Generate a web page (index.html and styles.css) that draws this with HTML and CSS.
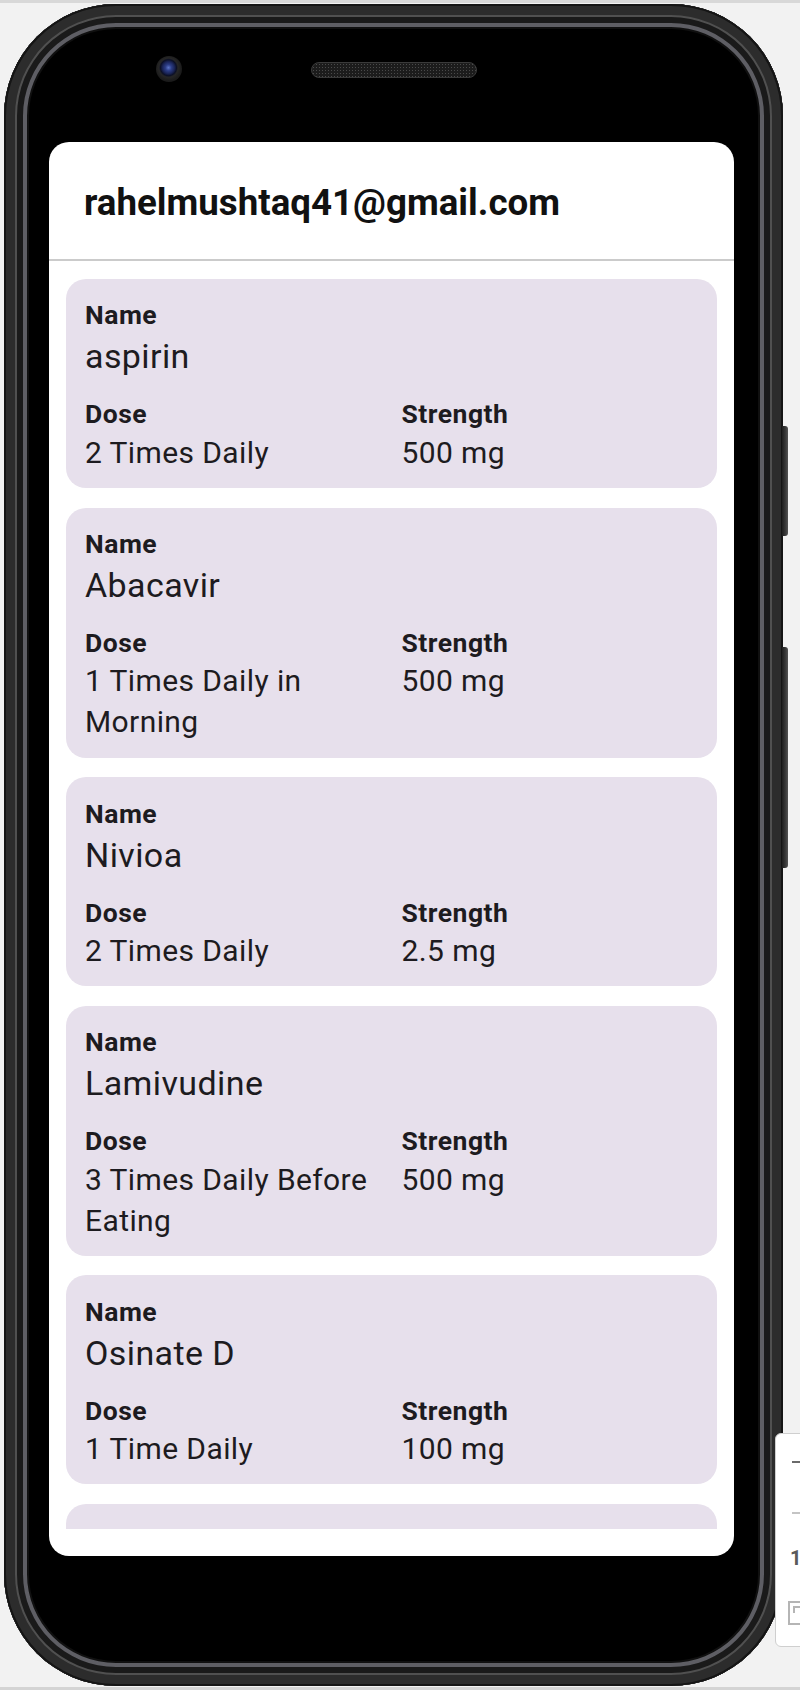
FILE: index.html
```html
<!DOCTYPE html>
<html lang="en">
<head>
<meta charset="utf-8">
<title>Medicines</title>
<link rel="stylesheet" href="styles.css">
</head>
<body>
<div class="top-strip"></div>
<div class="device">
  <div class="phone">
    <div class="bezel-top">
      <div class="camera"></div>
      <div class="speaker"></div>
    </div>
    <div class="screen">
      <header class="app-bar">
        <h1 class="email">rahelmushtaq41@gmail.com</h1>
      </header>
      <div class="list">
        <article class="card">
          <div class="label">Name</div>
          <div class="name-value">aspirin</div>
          <div class="row">
            <div class="col"><div class="label">Dose</div><div class="value">2 Times Daily</div></div>
            <div class="col"><div class="label">Strength</div><div class="value">500 mg</div></div>
          </div>
        </article>
        <article class="card">
          <div class="label">Name</div>
          <div class="name-value">Abacavir</div>
          <div class="row">
            <div class="col"><div class="label">Dose</div><div class="value">1 Times Daily in Morning</div></div>
            <div class="col"><div class="label">Strength</div><div class="value">500 mg</div></div>
          </div>
        </article>
        <article class="card">
          <div class="label">Name</div>
          <div class="name-value">Nivioa</div>
          <div class="row">
            <div class="col"><div class="label">Dose</div><div class="value">2 Times Daily</div></div>
            <div class="col"><div class="label">Strength</div><div class="value">2.5 mg</div></div>
          </div>
        </article>
        <article class="card">
          <div class="label">Name</div>
          <div class="name-value">Lamivudine</div>
          <div class="row">
            <div class="col"><div class="label">Dose</div><div class="value">3 Times Daily Before Eating</div></div>
            <div class="col"><div class="label">Strength</div><div class="value">500 mg</div></div>
          </div>
        </article>
        <article class="card">
          <div class="label">Name</div>
          <div class="name-value">Osinate D</div>
          <div class="row">
            <div class="col"><div class="label">Dose</div><div class="value">1 Time Daily</div></div>
            <div class="col"><div class="label">Strength</div><div class="value">100 mg</div></div>
          </div>
        </article>
        <article class="card card-peek" aria-hidden="true"></article>
      </div>
      <div class="screen-bottom"></div>
    </div>
    <div class="bezel-bottom"></div>
  </div>
  <div class="side-buttons">
    <span class="side-btn power"></span>
    <span class="side-btn volume"></span>
  </div>
</div>
<div class="emu-toolbar">
  <span class="tb-dash dark"></span>
  <span class="tb-dash light"></span>
  <span class="tb-num">1</span>
  <svg class="tb-icon" width="24" height="24" viewBox="0 0 24 24">
    <rect x="1" y="1" width="22" height="22" fill="none" stroke="#b5b5b5" stroke-width="2"/>
    <path d="M6 12V6h7" fill="none" stroke="#b5b5b5" stroke-width="2"/>
  </svg>
</div>
<div class="bottom-strip"></div>
</body>
</html>
```

FILE: styles.css
```css
html, body {
  margin: 0;
  padding: 0;
}

body {
  width: 800px;
  height: 1690px;
  overflow: hidden;
  background: #f2f2f2;
  display: flex;
  flex-direction: column;
  font-family: Roboto, "Noto Sans", sans-serif;
  position: relative;
}

.top-strip {
  height: 3px;
  background: #d8d8d8;
  flex-shrink: 0;
}

.bottom-strip {
  height: 3px;
  background: #d4d4d4;
  margin-top: auto;
  flex-shrink: 0;
}

.device {
  display: flex;
  margin-top: 1px;
  margin-left: 4px;
  flex-shrink: 0;
}

.phone {
  width: 779px;
  height: 1682px;
  box-sizing: border-box;
  padding: 0 49px 0 44.5px;
  border-radius: 112px;
  background: #000;
  box-shadow:
    inset 0 0 0 2px #151515,
    inset 0 0 0 11px #2c2c2c,
    inset 0 0 0 13px #505050,
    inset 0 0 0 19px #1a1a1a,
    inset 0 0 0 23px #5e5e64,
    inset 0 0 0 25px #101010;
  display: flex;
  flex-direction: column;
}

.bezel-top {
  height: 138px;
  flex-shrink: 0;
  display: flex;
  align-items: flex-start;
}

.camera {
  width: 26px;
  height: 26px;
  border-radius: 50%;
  margin-left: 107px;
  margin-top: 52px;
  background: radial-gradient(circle at 48% 45%, #5d75c8 0, #2c3d86 3px, #1a2457 6px, #0c1026 8px, #262626 9.5px, #1b1b1b 13px);
}

.speaker {
  width: 166px;
  height: 16px;
  box-sizing: border-box;
  margin-left: 129.5px;
  margin-top: 58px;
  border-radius: 8px;
  border: 1px solid #3a3a3a;
  background-color: #1c1c1c;
  background-image: radial-gradient(circle, #4a4a4a 0.7px, transparent 1px);
  background-size: 3px 3px;
}

.screen {
  width: 685.5px;
  height: 1414px;
  flex-shrink: 0;
  background: #fff;
  border-radius: 20px;
  overflow: hidden;
  display: flex;
  flex-direction: column;
}

.bezel-bottom {
  flex: 1;
}

.app-bar {
  height: 119px;
  box-sizing: border-box;
  padding: 39px 0 0 35.5px;
  border-bottom: 2px solid #cbcbcb;
  flex-shrink: 0;
}

.email {
  margin: 0;
  font-size: 36.7px;
  line-height: 44px;
  font-weight: 700;
  color: #111;
}

.list {
  height: 1268px;
  flex-shrink: 0;
  box-sizing: border-box;
  overflow: hidden;
  padding: 18px 17px 0 17.5px;
  display: flex;
  flex-direction: column;
  gap: 19.5px;
}

.screen-bottom {
  height: 27px;
  flex-shrink: 0;
}

.card {
  flex-shrink: 0;
  background: #e7e0ec;
  border-radius: 20px;
  padding: 20.4px 19px 15.2px 19px;
  color: #1d1b20;
}

.card-peek {
  height: 209px;
  box-sizing: border-box;
}

.label {
  font-size: 26.5px;
  line-height: 32px;
  font-weight: 700;
  letter-spacing: 0.5px;
}

.name-value {
  margin-top: 4px;
  font-size: 34px;
  line-height: 42px;
  font-weight: 400;
  letter-spacing: 0.4px;
}

.row {
  margin-top: 21px;
  display: grid;
  grid-template-columns: 1fr 1fr;
  column-gap: 20px;
}

.value {
  margin-top: 1.5px;
  font-size: 30px;
  line-height: 41px;
  font-weight: 400;
  letter-spacing: 0.4px;
}

.side-buttons {
  display: flex;
  flex-direction: column;
  margin-left: -1px;
}

.side-btn {
  display: block;
  width: 6px;
  border-radius: 0 3px 3px 0;
  background: linear-gradient(90deg, #1e1e1e, #3a3a3a 60%, #555);
}

.side-btn.power {
  margin-top: 422px;
  height: 110px;
}

.side-btn.volume {
  margin-top: 111px;
  height: 221px;
}

.emu-toolbar {
  position: absolute;
  left: 775px;
  top: 1433px;
  width: 40px;
  height: 214px;
  box-sizing: border-box;
  background: #fff;
  border: 1px solid #cfcfcf;
  border-radius: 6px;
  display: flex;
  flex-direction: column;
  align-items: flex-start;
  padding-left: 13px;
}

.tb-dash {
  display: block;
  width: 12px;
  height: 2px;
}

.tb-dash.dark {
  margin-top: 27px;
  margin-left: 3px;
  background: #6a6a6a;
}

.tb-dash.light {
  margin-top: 49px;
  margin-left: 3px;
  background: #c4c4c4;
}

.tb-num {
  margin-top: 34px;
  margin-left: 1px;
  font-size: 20px;
  line-height: 20px;
  font-weight: 700;
  color: #5a5a5a;
}

.tb-icon {
  margin-top: 33px;
  margin-left: -1px;
}
```
